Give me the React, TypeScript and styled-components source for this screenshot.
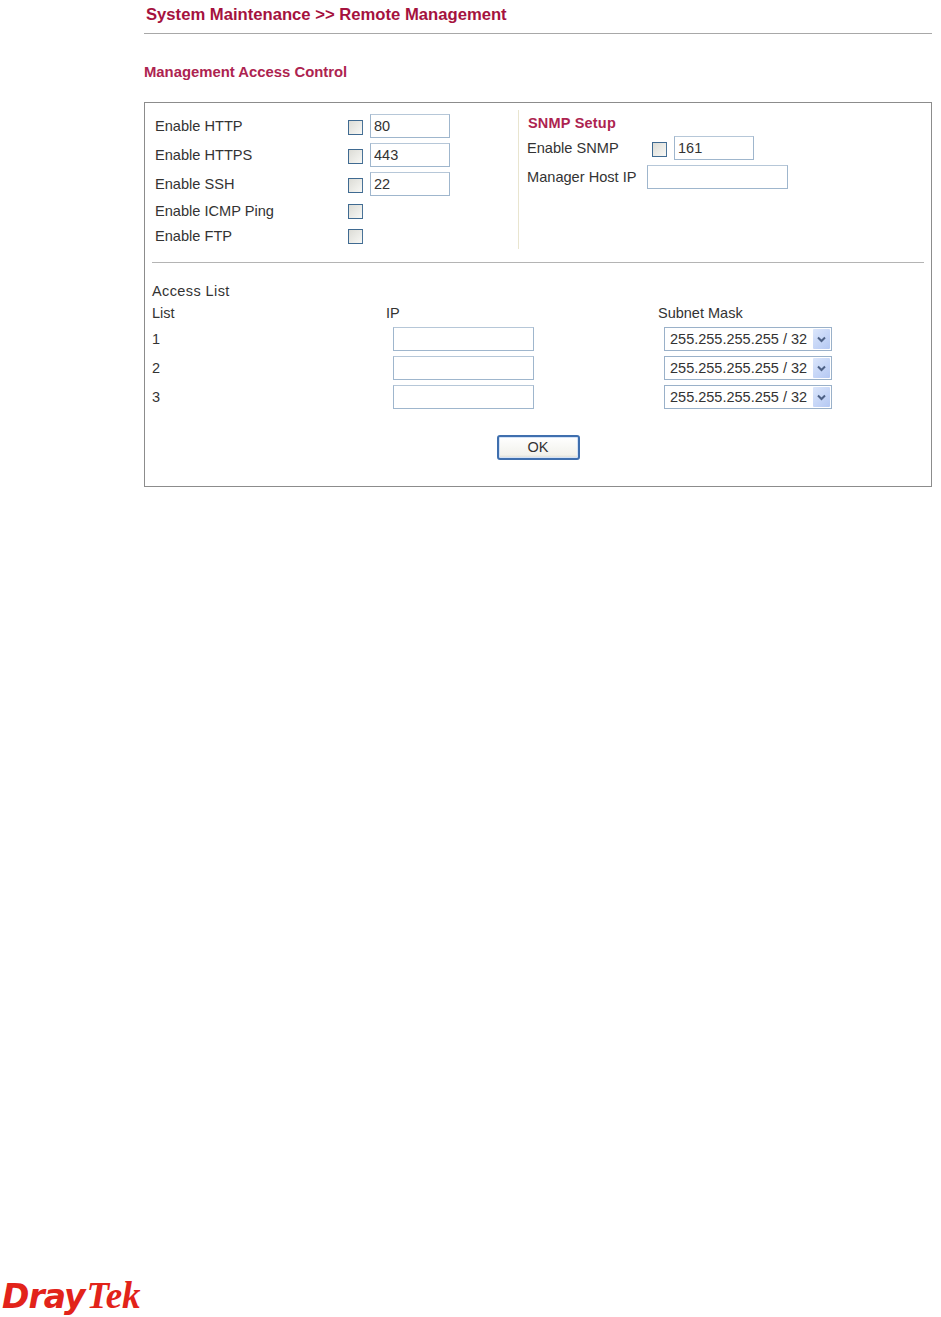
import { Fragment } from "react";
import styled, { createGlobalStyle } from "styled-components";

const GlobalStyle = createGlobalStyle`
  html, body {
    margin: 0;
    padding: 0;
    background: #fff;
  }
  body {
    font-family: "Liberation Sans", Arial, sans-serif;
    color: #333;
  }
`;

const Page = styled.div`
  box-sizing: border-box;
  width: 941px;
  height: 1317px;
  overflow: hidden;
  display: flex;
  flex-direction: column;
`;
const Content = styled.div`
  margin: 0 9px 0 144px;
`;
const PageTitle = styled.h1`
  margin: 0;
  height: 33px;
  box-sizing: border-box;
  padding: 5px 0 0 2px;
  font-size: 16.65px;
  line-height: 19px;
  font-weight: 700;
  color: #a5123e;
`;
const TitleRule = styled.div`
  height: 1px;
  background: #a8a8a8;
`;
const SectionTitle = styled.h2`
  margin: 28px 0 0;
  height: 40px;
  font-size: 14.85px;
  line-height: 20px;
  font-weight: 700;
  color: #ad2350;
`;
const Panel = styled.div`
  box-sizing: border-box;
  height: 385px;
  border: 1px solid #8c8c8c;
  padding: 7px 7px 0;
`;
const TopSection = styled.div`
  display: flex;
  height: 139px;
`;
const LeftColumn = styled.div`
  box-sizing: border-box;
  width: 367px;
  height: 139px;
  padding: 4px 0 0 3px;
  border-right: 1px solid #e9e5cf;
`;
const RightColumn = styled.div`
  padding-left: 8px;
`;
const Row = styled.div<{ $after?: number }>`
  display: flex;
  align-items: center;
  height: 24px;
  margin-bottom: ${(p) => p.$after ?? 0}px;
`;
const Label = styled.span<{ $width: number }>`
  width: ${(p) => p.$width}px;
  flex: none;
  font-size: 14.6px;
  line-height: 24px;
`;
const CheckBox = styled.span<{ $drop?: number }>`
  box-sizing: border-box;
  flex: none;
  width: 15px;
  height: 15px;
  margin: ${(p) => p.$drop ?? 2}px 7px 0 0;
  border: 1px solid #3f6a91;
  border-right-color: #4a7398;
  background: linear-gradient(135deg, #dcdcd6, #f8f8f5);
`;
const TextBox = styled.input<{ $width: number }>`
  box-sizing: border-box;
  width: ${(p) => p.$width}px;
  height: 24px;
  margin: 0;
  padding: 0 3px;
  border: 1px solid #9fb6cd;
  border-top-color: #b6c7d8;
  background: #fff;
  font-family: "Liberation Sans", Arial, sans-serif;
  font-size: 14.5px;
  color: #333;
  outline: none;
`;
const SnmpHeading = styled.div`
  height: 26px;
  padding: 3px 0 0 1px;
  box-sizing: border-box;
  font-size: 14.5px;
  line-height: 20px;
  font-weight: 700;
  letter-spacing: 0.2px;
  color: #ad2350;
`;
const Divider = styled.div`
  height: 1px;
  margin-top: 13px;
  background: #b4b4b4;
`;
const AccessHeading = styled.div`
  margin-top: 17px;
  font-size: 14.5px;
  line-height: 22px;
  letter-spacing: 0.4px;
`;
const HeadRow = styled.div`
  display: grid;
  grid-template-columns: 234px 272px 1fr;
  height: 25px;
`;
const ColumnHead = styled.div`
  font-size: 14.5px;
  line-height: 22px;
  height: 22px;
`;
const AccessGrid = styled.div`
  display: grid;
  grid-template-columns: 234px 272px 1fr;
  grid-auto-rows: 29px;
  align-items: start;
`;
const RowNumber = styled.div`
  font-size: 14.5px;
  line-height: 24px;
`;
const IpCell = styled.div`
  padding-left: 7px;
`;
const MaskCell = styled.div`
  padding-left: 6px;
`;
const MaskSelect = styled.div`
  box-sizing: border-box;
  display: flex;
  align-items: center;
  width: 168px;
  height: 24px;
  border: 1px solid #9ab1c9;
  padding: 1px;
  background: #fff;
`;
const MaskValue = styled.select`
  appearance: none;
  flex: 1;
  min-width: 0;
  height: 20px;
  border: 0;
  margin: 0;
  padding: 0 0 0 4px;
  background: transparent;
  font-family: "Liberation Sans", Arial, sans-serif;
  font-size: 14.5px;
  color: #333;
  outline: none;
`;
const MaskArrow = styled.span`
  flex: none;
  display: flex;
  align-items: center;
  justify-content: center;
  width: 17px;
  height: 20px;
  border-radius: 1px;
  background: linear-gradient(135deg, #dbe6fb, #b4c8f3);
  color: #4d6185;
`;
const ButtonRow = styled.div`
  display: flex;
  justify-content: center;
  margin-top: 21px;
`;
const OkButton = styled.button`
  box-sizing: border-box;
  width: 83px;
  height: 25px;
  padding: 0 0 2px;
  border: 2px solid #3f6fae;
  border-radius: 3px;
  box-shadow: inset 0 0 0 1px #d3e2f6;
  background: linear-gradient(#ffffff, #f2f2ec 85%, #d8d8d0);
  font-family: "Liberation Sans", Arial, sans-serif;
  font-size: 14.5px;
  color: #333;
`;
const Logo = styled.div`
  margin-top: auto;
  height: 44px;
  padding-left: 2px;
  display: flex;
  align-items: baseline;
  color: #e2231a;
  line-height: 46px;
  white-space: nowrap;
`;
const LogoDray = styled.span`
  font-family: "DejaVu Sans", sans-serif;
  font-size: 33px;
  font-weight: 700;
  font-style: italic;
  letter-spacing: -1px;
`;
const LogoTek = styled.span`
  margin-left: 2px;
  font-family: "Liberation Serif", serif;
  font-size: 37px;
  font-weight: 700;
  font-style: italic;
`;

const Chevron = () => (
  <svg width="9" height="7" viewBox="0 0 9 7" fill="none">
    <path d="M1 1.5 4.5 5 8 1.5" stroke="currentColor" strokeWidth="2" />
  </svg>
);

const services = [
  { label: "Enable HTTP", port: "80", after: 5, drop: 2 },
  { label: "Enable HTTPS", port: "443", after: 5, drop: 2 },
  { label: "Enable SSH", port: "22", after: 3, drop: 2 },
  { label: "Enable ICMP Ping", after: 1, drop: 0 },
  { label: "Enable FTP", after: 0, drop: 0 },
];

const App = () => {
  return (
    <Page>
      <GlobalStyle />
      <Content>
        <PageTitle>System Maintenance &gt;&gt; Remote Management</PageTitle>
        <TitleRule />
        <SectionTitle>Management Access Control</SectionTitle>
        <Panel>
          <TopSection>
            <LeftColumn>
              {services.map((s) => (
                <Row key={s.label} $after={s.after}>
                  <Label $width={193}>{s.label}</Label>
                  <CheckBox $drop={s.drop} />
                  {s.port && <TextBox $width={80} defaultValue={s.port} />}
                </Row>
              ))}
            </LeftColumn>
            <RightColumn>
              <SnmpHeading>SNMP Setup</SnmpHeading>
              <Row $after={5}>
                <Label $width={125}>Enable SNMP</Label>
                <CheckBox />
                <TextBox $width={80} defaultValue="161" />
              </Row>
              <Row>
                <Label $width={120}>Manager Host IP</Label>
                <TextBox $width={141} />
              </Row>
            </RightColumn>
          </TopSection>
          <Divider />
          <AccessHeading>Access List</AccessHeading>
          <HeadRow>
            <ColumnHead>List</ColumnHead>
            <ColumnHead>IP</ColumnHead>
            <ColumnHead>Subnet Mask</ColumnHead>
          </HeadRow>
          <AccessGrid>
            {["1", "2", "3"].map((n) => (
              <Fragment key={n}>
                <RowNumber>{n}</RowNumber>
                <IpCell>
                  <TextBox $width={141} />
                </IpCell>
                <MaskCell>
                  <MaskSelect>
                    <MaskValue defaultValue="32">
                      <option value="32">255.255.255.255 / 32</option>
                    </MaskValue>
                    <MaskArrow>
                      <Chevron />
                    </MaskArrow>
                  </MaskSelect>
                </MaskCell>
              </Fragment>
            ))}
          </AccessGrid>
          <ButtonRow>
            <OkButton>OK</OkButton>
          </ButtonRow>
        </Panel>
      </Content>
      <Logo>
        <LogoDray>Dray</LogoDray>
        <LogoTek>Tek</LogoTek>
      </Logo>
    </Page>
  );
};

export default App;
